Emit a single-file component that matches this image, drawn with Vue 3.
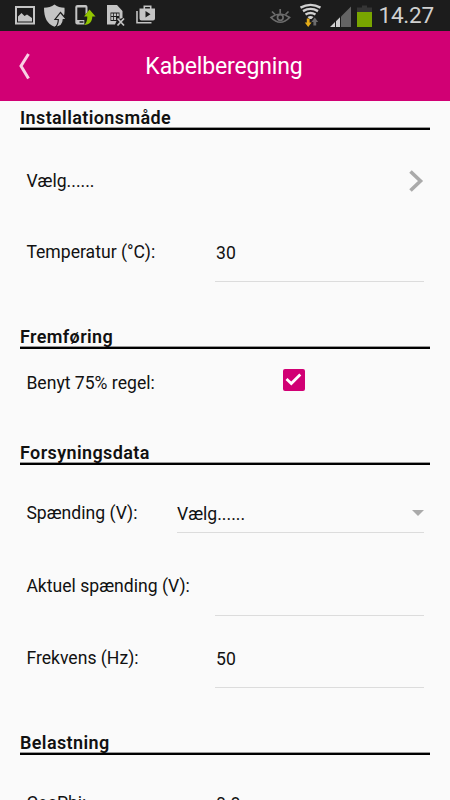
<script setup>
import { ref } from 'vue'

const temperature = ref('30')
const useRule = ref(true)
const actualVoltage = ref('')
const frequency = ref('50')
const cosPhi = ref('0.8')

function toggleRule() {
    useRule.value = !useRule.value
}
</script>

<template>
    <div class="screen">
        <div class="status-bar">
            <svg class="status-left" width="170" height="31" viewBox="0 0 170 31">
                <!-- picture -->
                <path fill="#c4c4c4" fill-rule="evenodd" d="M15 6h20v18.500h-20zM17 8v14.500h16v-14.500z" />
                <path fill="#c4c4c4" d="M18 21.500v-5l3.500-3.500 3 3 2.500-1.500 5 3.500v3.500z" />
                <!-- shield -->
                <path fill="#c4c4c4" d="M54.500 4.500c3 2.300 6 3 10 3.200c.3 4 0 8-2 11.500c-2 4-4.500 6.200-8 7.500c-7.500-3-10.500-9-10.500-19c4-.2 7.500-.9 10.500-3.200z" />
                <path fill="#c4c4c4" stroke="#1c1c1c" stroke-width="1.200" d="M60.500 12.500l6 7h-3.200c0 4.500-2.800 7.300-8.300 8c2.500-2 3.300-4.500 3.300-8h-3.300z" />
                <!-- phone -->
                <path fill="#c4c4c4" fill-rule="evenodd" d="M77.500 5h8q2 0 2 2v5l-2 2.500v-7h-8.200v12.500h7v4.500h-7q-2 0-2-2v-15.500q0-2 2.200-2zM79.500 21.300v1.400h4v-1.400z" />
                <path fill="#92c500" d="M89.500 9.500l6 7h-3.200c0 5-2.500 8-8.300 8.500c2.500-2 3.300-4.500 3.300-8.500h-3.300z" />
                <!-- sim card -->
                <path fill="#c4c4c4" fill-rule="evenodd" d="M107 5h10l5.500 6v7l-3 1v-6.500h-9v8.500h6l-1.500 3.500h-8z" />
                <path fill="#c4c4c4" d="M111.200 13.500h2v2.500h-2zM114 13.500h2v2.500h-2zM116.800 13.500h2v2.500h-2zM111.200 17h2v3h-2zM114 17h2v3h-2z" />
                <path stroke="#c4c4c4" stroke-width="1.800" d="M117.500 18.500l6.500 7M124 18.500l-6.500 7" />
                <!-- play store -->
                <path fill="none" stroke="#c4c4c4" stroke-width="1.600" d="M137 11v11.700h14.500M144.300 9v-2.700h6.400v2.700" />
                <path fill="#c4c4c4" fill-rule="evenodd" d="M139.500 8.500h15.500v10q0 2-2 2h-11.500q-2 0-2-2zM145.500 11v6.500l5-3.200z" />
            </svg>
            <div class="status-right">
                <svg width="114" height="31" viewBox="260 0 114 31">
                    <!-- eye -->
                    <g fill="none" stroke="#6c6c6c" stroke-width="1.700">
                        <path d="M271 17.500q9.300-7 18.600 0q-9.300 9.500-18.600 0z" />
                        <path d="M272 11.500l3 3M280.200 9v4.500M288.500 11.500l-3 3" />
                        <circle cx="280.300" cy="17.500" r="2.800" />
                    </g>
                    <!-- wifi -->
                    <g fill="none" stroke="#d0d0d0" stroke-width="2.400">
                        <path d="M300.500 7.600q10-5.500 20 0" />
                        <path d="M303 11.100q7.500-4.500 15 0" />
                        <path d="M305.500 14.500q5-3 10 0" />
                    </g>
                    <path fill="#d0d0d0" d="M307.500 17q3-2 6 0l-2 2h-2z" />
                    <path fill="#e5ad18" d="M306.800 18.500h2.800v4h2l-3.400 4.500-3.400-4.500h2z" />
                    <path fill="#6b6b6b" d="M314.800 17.500l3.400 4.500h-2v3.500h-2.800v-3.500h-2z" />
                    <!-- signal -->
                    <path fill="#646464" d="M341 16.500l10-10v20.500h-10z" />
                    <path fill="#d0d0d0" d="M330 27l5-5v5zM336 21.200l4-4v9.800h-4z" />
                    <!-- battery -->
                    <path fill="#353535" d="M362 5.500h5v2h5v5h-15v-5h5z" />
                    <path fill="#79a500" d="M357 12h15v15h-15z" />
                </svg>
                <span class="clock">14.27</span>
            </div>
        </div>

        <div class="header">
            <svg class="back" width="14" height="30" viewBox="0 0 14 30">
                <path d="M10.500 3L3 15L10.500 27.500" />
            </svg>
            <div class="title">Kabelberegning</div>
        </div>

        <div class="content">
            <div class="section section-install">
                <div class="section-title">Installationsmåde</div>
                <div class="row row-link">
                    <div class="label">Vælg......</div>
                    <svg class="chevron" width="17" height="26" viewBox="0 0 17 26">
                        <path d="M3.500 3.500L13.500 13L3.500 22.500" />
                    </svg>
                </div>
                <div class="row">
                    <div class="label">Temperatur (°C):</div>
                    <div class="field">{{ temperature }}</div>
                </div>
            </div>

            <div class="section section-routing">
                <div class="section-title">Fremføring</div>
                <div class="row">
                    <div class="label">Benyt 75% regel:</div>
                    <div class="check-cell">
                        <div class="checkbox" :class="{ checked: useRule }" @click="toggleRule">
                            <svg v-if="useRule" width="22" height="22" viewBox="0 0 22 22">
                                <path d="M3.500 10L8.300 14.500L17.300 5.500" />
                            </svg>
                        </div>
                    </div>
                </div>
            </div>

            <div class="section section-supply">
                <div class="section-title">Forsyningsdata</div>
                <div class="row">
                    <div class="label">Spænding (V):</div>
                    <div class="select">
                        <span>Vælg......</span>
                        <div class="arrow"></div>
                    </div>
                </div>
                <div class="row">
                    <div class="label">Aktuel spænding (V):</div>
                    <div class="field">{{ actualVoltage }}</div>
                </div>
                <div class="row">
                    <div class="label">Frekvens (Hz):</div>
                    <div class="field">{{ frequency }}</div>
                </div>
            </div>

            <div class="section section-load">
                <div class="section-title">Belastning</div>
                <div class="row">
                    <div class="label">CosPhi:</div>
                    <div class="field">{{ cosPhi }}</div>
                </div>
            </div>
        </div>
    </div>
</template>

<style>
body {
    overflow: hidden;
}
</style>

<style scoped>
.screen {
    width: 450px;
    height: 800px;
    overflow: hidden;
    display: flex;
    flex-direction: column;
    background-color: #fafafa;
    font-family: Roboto, "Liberation Sans", sans-serif;
    color: #111;
}
.status-bar {
    height: 31px;
    flex-shrink: 0;
    display: flex;
    justify-content: space-between;
    background-color: #1c1c1c;
}
.status-right {
    display: flex;
    padding-right: 16px;
}
.clock {
    width: 60px;
    text-align: right;
    white-space: nowrap;
    font-size: 22.5px;
    letter-spacing: -0.2px;
    line-height: 31px;
    color: #d0d0d0;
}
.header {
    height: 70px;
    flex-shrink: 0;
    display: flex;
    align-items: center;
    background-color: #d10074;
}
.back {
    margin-left: 18px;
}
.back path {
    fill: none;
    stroke: #f9cfe4;
    stroke-width: 3;
}
.title {
    flex: 1;
    padding-top: 2px;
    padding-right: 34px;
    text-align: center;
    font-size: 23px;
    letter-spacing: -0.15px;
    line-height: 70px;
    color: #fff;
}
.content {
    flex-shrink: 0;
}
.section {
    padding: 0 20px;
}
.section-install {
    height: 219px;
}
.section-routing {
    height: 116px;
}
.section-supply {
    height: 290px;
}
.section-title {
    height: 27px;
    margin-bottom: 12px;
    border-bottom: 2px solid #000;
    box-shadow: inset 0 -1px #999;
    font-size: 18px;
    font-weight: 600;
    letter-spacing: 0.38px;
    line-height: 33px;
    color: #111;
}
.row {
    height: 72.5px;
    padding: 0 6px;
    display: flex;
    justify-content: space-between;
}
.section-install .row-link {
    height: 70px;
    margin-top: 16px;
    align-items: center;
}
.section-routing .row {
    margin-top: -14px;
}
.label {
    padding-left: 0.4px;
    font-size: 17.6px;
    line-height: 73px;
    white-space: nowrap;
}
.field {
    width: 208px;
    height: 65px;
    padding-left: 1px;
    border-bottom: 1px solid #dcdcdc;
    font-size: 17.6px;
    line-height: 75px;
}
.check-cell {
    width: 141px;
    padding-top: 22px;
}
.checkbox {
    width: 22px;
    height: 22px;
    border-radius: 2px;
    border: 1px solid #999;
    box-sizing: border-box;
    cursor: pointer;
}
.checkbox.checked {
    border: none;
    background-color: #d10074;
}
.checkbox path {
    fill: none;
    stroke: #fff;
    stroke-width: 2.8;
}
.select {
    width: 247px;
    height: 55px;
    display: flex;
    justify-content: space-between;
    border-bottom: 1px solid #dcdcdc;
    font-size: 17.6px;
    line-height: 75px;
}
.arrow {
    width: 0;
    height: 0;
    margin-top: 33px;
    border-left: 6.5px solid transparent;
    border-right: 6.5px solid transparent;
    border-top: 6.5px solid #aaa;
}
.chevron path {
    fill: none;
    stroke: #aaa;
    stroke-width: 3.6;
}
</style>
